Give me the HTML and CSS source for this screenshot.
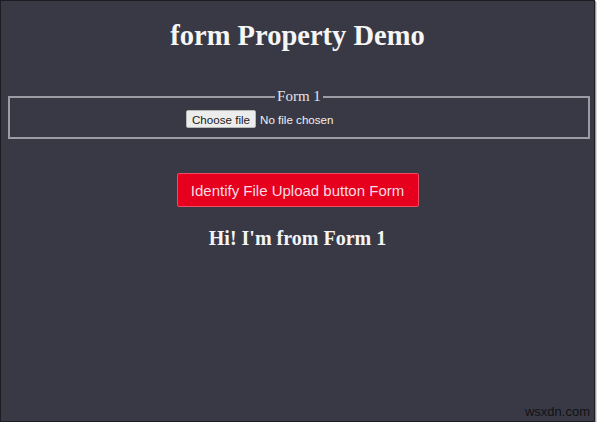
FILE: index.html
```html
<!DOCTYPE html>
<html>
<head>
<meta charset="utf-8">
<title>form Property Demo</title>
<link rel="stylesheet" href="styles.css">
</head>
<body>
<div class="frame">
  <h1 class="title">form Property Demo</h1>
  <form class="form-one">
    <fieldset class="group">
      <legend class="group-label">Form 1</legend>
      <div class="file-row">
        <span class="file-btn">Choose file</span>
        <span class="file-status">No file chosen</span>
      </div>
    </fieldset>
  </form>
  <div class="action">
    <button class="identify-btn" type="button">Identify File Upload button Form</button>
  </div>
  <p class="result">Hi! I'm from Form 1</p>
  <span class="watermark">wsxdn.com</span>
</div>
</body>
</html>
```

FILE: styles.css
```css
html, body {
  margin: 0;
  padding: 0;
  background: #ffffff;
}

.frame {
  position: relative;
  box-sizing: border-box;
  width: 595px;
  height: 422px;
  background: #393946;
  border: 1px solid #1c1c22;
  box-shadow: 1px 1px 0 #9a9a9a, 2px 2px 0 #d8d8d8;
  display: flex;
  flex-direction: column;
  font-family: "Liberation Serif", serif;
}

.title {
  margin: 19px 0 0;
  text-align: center;
  font-size: 28.5px;
  line-height: 32px;
  font-weight: bold;
  color: #f6f6f6;
}

.form-one {
  margin: 37px 4px 0 7px;
}

.group {
  margin: 0;
  padding: 6px 10px 9px;
  border: 2px solid #9c9ca4;
}

.group-label {
  margin: 0 auto;
  padding: 0 2px;
  font-size: 15px;
  line-height: 15px;
  color: #e2e2e6;
}

.file-row {
  width: 226px;
  margin: 0 auto;
  display: flex;
  align-items: center;
  gap: 4px;
  font-family: "Liberation Sans", Arial, sans-serif;
  font-size: 11.6px;
}

.file-btn {
  box-sizing: border-box;
  height: 18px;
  padding: 0 5px;
  display: flex;
  align-items: center;
  background: #ececec;
  border: 1px solid #b8b8b8;
  border-radius: 2px;
  color: #1a1a1a;
}

.file-status {
  color: #f0f0f0;
}

.action {
  margin-top: 34px;
  display: flex;
  justify-content: center;
}

.identify-btn {
  box-sizing: border-box;
  width: 242px;
  height: 34px;
  background: #e6001e;
  border: 1px solid #f04a62;
  border-radius: 2px;
  color: #f6dce2;
  font-family: "Liberation Sans", Arial, sans-serif;
  font-size: 15px;
  padding: 0;
}

.result {
  margin: 19px 0 0;
  text-align: center;
  font-size: 20px;
  line-height: 24px;
  font-weight: bold;
  color: #f4f4f4;
}

.watermark {
  position: absolute;
  right: 4px;
  bottom: 2px;
  font-family: "Liberation Sans", Arial, sans-serif;
  font-size: 13px;
  color: #121212;
}
```
